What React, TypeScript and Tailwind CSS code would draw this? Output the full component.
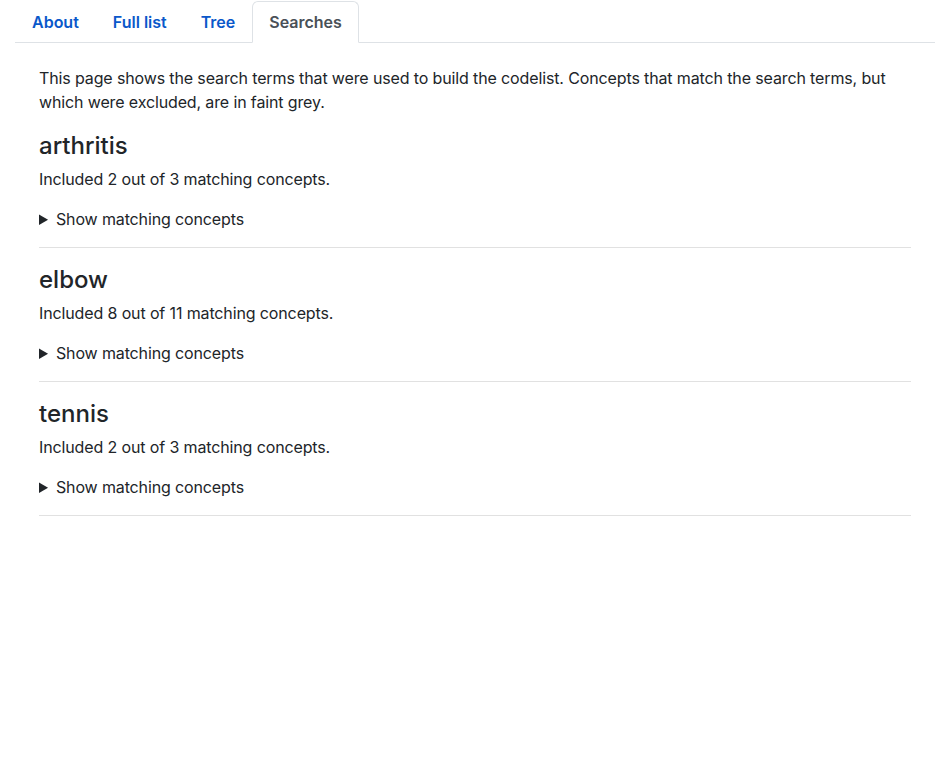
import React from "react";

const searches = [
  { term: "arthritis", included: 2, total: 3 },
  { term: "elbow", included: 8, total: 11 },
  { term: "tennis", included: 2, total: 3 },
];

export default function App() {
  return (
    <div
      className="min-h-screen bg-white text-[#212529] text-[16px] leading-6 tracking-[-0.13px]"
      style={{ fontFamily: "Inter, 'Noto Sans', sans-serif" }}
    >
      <div className="px-[15px] pt-px">
        <ul className="flex border-b border-[#dee2e6]">
          {["About", "Full list", "Tree"].map((t) => (
            <li key={t} className="-mb-px">
              <a className="block border border-transparent px-4 py-2 font-semibold tracking-normal text-[#0a58ca]">
                {t}
              </a>
            </li>
          ))}
          <li className="-mb-px">
            <a className="block rounded-t-md border border-[#dee2e6] border-b-white bg-white px-4 py-2 font-semibold tracking-normal text-[#495057]">
              Searches
            </a>
          </li>
        </ul>
        <div className="px-6 pt-[23px]">
          <p className="mb-4">
            This page shows the search terms that were used to build the codelist. Concepts that
            match the search terms, but which were excluded, are in faint grey.
          </p>
          {searches.map((s) => (
            <div key={s.term}>
              <h4 className="mb-[6px] pt-[1px] text-[24px] leading-[30px] font-medium tracking-normal">
                {s.term}
              </h4>
              <p className="mb-4">
                Included {s.included} out of {s.total} matching concepts.
              </p>
              <details className="mb-4">
                <summary className="cursor-pointer">Show matching concepts</summary>
              </details>
              <hr className="my-4 border-t border-[#e1e1e1]" />
            </div>
          ))}
        </div>
      </div>
    </div>
  );
}
